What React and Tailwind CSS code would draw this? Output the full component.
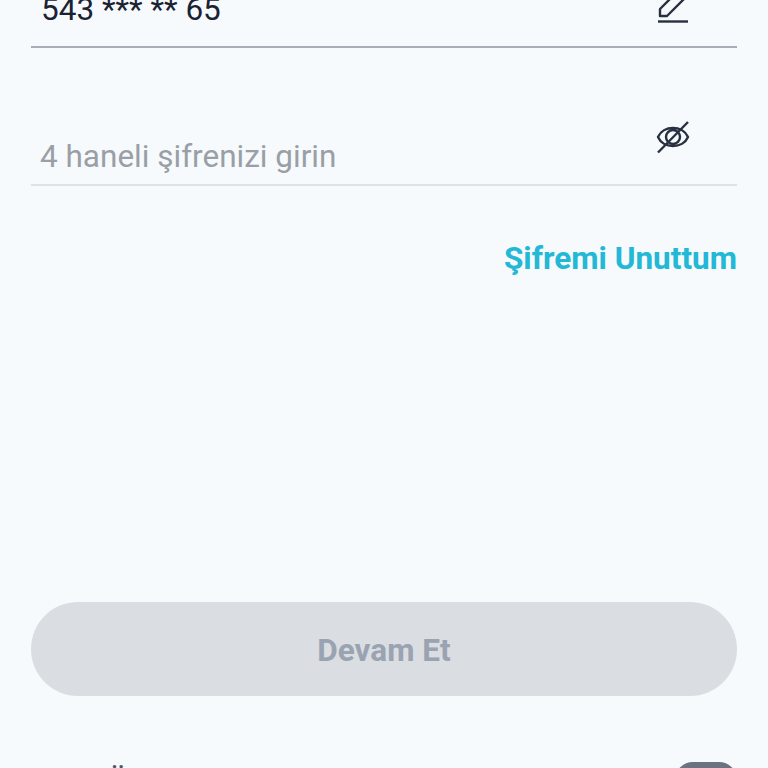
export default function App() {
  return (
    <div className="h-[768px] w-[768px] overflow-hidden bg-[#f6fafd] font-['Roboto',sans-serif]">
      <div className="ml-[31px] -mt-[14px] w-[706px]">
        <div className="flex h-[62px] items-center justify-between border-b-2 border-[#a6adb8] pb-[13px] pl-[10px]">
          <span className="text-[31.5px] leading-[36px] text-[#1a2233]">543 *** ** 65</span>
          <svg className="mr-[48px] mt-[-7px] h-[36px] w-[32px]" viewBox="0 0 32 36" fill="none" stroke="#283040" strokeWidth="2.4">
            <path d="M1 33.5 H31" />
            <path d="M3 28 V21 L20 4 L27 11 L10 28 Z" strokeLinejoin="round" />
          </svg>
        </div>
        <div className="mt-[75px] flex h-[63px] items-start justify-between border-b-2 border-[#dfe2e6] pl-[9px]">
          <span className="mt-[16px] text-[31.5px] leading-[36px] text-[#9a9fa6]">4 haneli şifrenizi girin</span>
          <svg className="mr-[47px] -mt-[3px] h-[34px] w-[34px]" viewBox="0 0 34 34" fill="none" stroke="#283040" strokeWidth="2.4">
            <path d="M2 17 C7 5 27 5 32 17 C27 29 7 29 2 17 Z" strokeLinejoin="round" />
            <circle cx="17" cy="17" r="7" />
            <path d="M2 32.5 L32 2" />
          </svg>
        </div>
        <div className="mt-[53px] text-right text-[31.5px] leading-[40px] font-bold text-[#22b8d6]">Şifremi Unuttum</div>
        <div className="mt-[323px] flex h-[94px] items-center justify-center rounded-[47px] bg-[#dadde1] pt-[3px] text-[31.5px] font-bold text-[#9aa3b2]">Devam Et</div>
        <div className="mt-[66px] flex items-start justify-between">
          <span className="mt-[1px] pl-[9px] text-[31.5px] leading-[40px] text-[#4b5563]">Yeni Üye Ol</span>
          <div className="h-[36px] w-[62px] rounded-[18px] bg-[#6b7280]" />
        </div>
      </div>
    </div>
  );
}
